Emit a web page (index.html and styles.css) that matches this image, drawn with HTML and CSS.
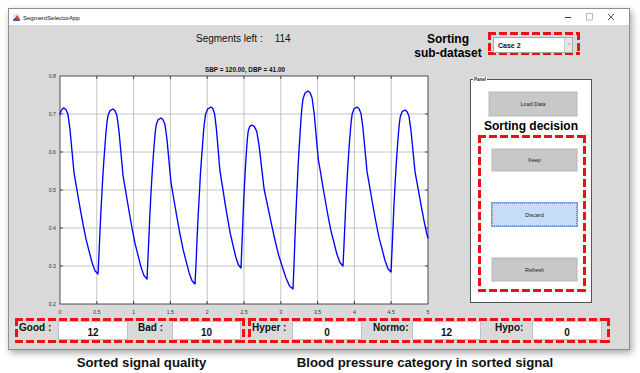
FILE: index.html
```html
<!DOCTYPE html>
<html>
<head>
<meta charset="utf-8">
<link rel="stylesheet" href="styles.css">
</head>
<body>
<div class="window">
  <div class="titlebar">
    <svg class="appicon" width="7" height="7" viewBox="0 0 7 7">
      <rect x="0" y="0" width="7" height="7" fill="#dfe6f3"/>
      <path d="M0 6 L2.5 3.5 L4 1 L5.5 3 L7 6 Z" fill="#d6452a"/>
      <path d="M0 6 L2.5 3.5 L3.5 5 L7 6 L7 7 L0 7 Z" fill="#2f5fb3"/>
    </svg>
    <span class="apptitle">SegmentSelectorApp</span>
    <div class="winctl">
      <svg width="62" height="12" viewBox="0 0 62 12">
        <line x1="3" y1="6.5" x2="9" y2="6.5" stroke="#222" stroke-width="0.9"/>
        <rect x="24.5" y="2.5" width="6" height="6.5" fill="none" stroke="#aaa" stroke-width="0.8"/>
        <path d="M46 3 L52 9 M52 3 L46 9" stroke="#333" stroke-width="0.8"/>
      </svg>
    </div>
  </div>
  <div class="content">
    <div class="toprow">
      <div class="segleft">Segments left :<span class="segnum">114</span></div>
      <div class="sortlabel">Sorting<br>sub-dataset</div>
      <div class="dropbox dashed">
        <div class="select"><span class="selval">Case 2</span><span class="selarrow">&#8964;</span></div>
      </div>
    </div>
    <div class="midrow">
      <svg class="plot" width="451" height="256" viewBox="9 60 451 256">
        <text class="ptitle" x="245" y="71.5" text-anchor="middle">SBP = 120.00, DBP = 41.00</text>
        <rect x="60" y="76" width="368" height="228" fill="#fff"/>
        <g stroke="#bdbdbd" stroke-width="0.9">
          <line x1="96.8" y1="76" x2="96.8" y2="304"/>
          <line x1="133.6" y1="76" x2="133.6" y2="304"/>
          <line x1="170.4" y1="76" x2="170.4" y2="304"/>
          <line x1="207.2" y1="76" x2="207.2" y2="304"/>
          <line x1="244" y1="76" x2="244" y2="304"/>
          <line x1="280.8" y1="76" x2="280.8" y2="304"/>
          <line x1="317.6" y1="76" x2="317.6" y2="304"/>
          <line x1="354.4" y1="76" x2="354.4" y2="304"/>
          <line x1="391.2" y1="76" x2="391.2" y2="304"/>
          <line x1="60" y1="114" x2="428" y2="114"/>
          <line x1="60" y1="152" x2="428" y2="152"/>
          <line x1="60" y1="190" x2="428" y2="190"/>
          <line x1="60" y1="228" x2="428" y2="228"/>
          <line x1="60" y1="266" x2="428" y2="266"/>
        </g>
        <g stroke="#262626" stroke-width="0.8">
          <path d="M96.8 76v3M133.6 76v3M170.4 76v3M207.2 76v3M244 76v3M280.8 76v3M317.6 76v3M354.4 76v3M391.2 76v3"/>
          <path d="M96.8 304v-3M133.6 304v-3M170.4 304v-3M207.2 304v-3M244 304v-3M280.8 304v-3M317.6 304v-3M354.4 304v-3M391.2 304v-3"/>
          <path d="M60 114h3M60 152h3M60 190h3M60 228h3M60 266h3"/>
          <path d="M428 114h-3M428 152h-3M428 190h-3M428 228h-3M428 266h-3"/>
          <rect x="60" y="76" width="368" height="228" fill="none"/>
        </g>
        <g class="ytick" text-anchor="end">
          <text x="56" y="78">0.8</text>
          <text x="56" y="116">0.7</text>
          <text x="56" y="154">0.6</text>
          <text x="56" y="192">0.5</text>
          <text x="56" y="230">0.4</text>
          <text x="56" y="268">0.3</text>
          <text x="56" y="306">0.2</text>
        </g>
        <g class="xtick" text-anchor="middle">
          <text x="60" y="314">0</text>
          <text x="96.8" y="314">0.5</text>
          <text x="133.6" y="314">1</text>
          <text x="170.4" y="314">1.5</text>
          <text x="207.2" y="314">2</text>
          <text x="244" y="314">2.5</text>
          <text x="280.8" y="314">3</text>
          <text x="317.6" y="314">3.5</text>
          <text x="354.4" y="314">4</text>
          <text x="391.2" y="314">4.5</text>
          <text x="428" y="314">5</text>
        </g>
        <polyline fill="none" stroke="#0000ff" stroke-width="1.35" stroke-linejoin="round" stroke-linecap="round" points="60,114 61,111 62,109.5 63,108.4 64,108 66,109.7 68,114.6 70,129.6 72,151.2 74,172.7 76,184.4 78,196 80,207.6 83,224.2 86,239.1 89,250.8 92,262.4 95,270.7 98,274 99,254.2 100,231.1 101,209.7 102,191.5 103,173.4 104,158.5 105,145.3 106,132.1 107,122.2 108,115.6 110,110.7 113,109 115,110.7 117,115.8 119,131.1 121,153.2 123,175.3 125,187.2 127,199.1 129,211 132,228 135,243.3 138,255.2 141,267.1 144,275.6 147,279 147.9,259.7 148.9,237.1 149.8,216.2 150.7,198.5 151.7,180.8 152.6,166.3 153.5,153.4 154.5,140.5 155.4,130.9 156.3,124.4 158.2,119.6 161,118 163,119.7 165,124.6 167,139.6 169,161.2 171,182.7 173,194.4 175,206 177,217.6 180,234.2 183,249.1 186,260.8 189,272.4 192,280.7 195,284 196.1,262.8 197.1,238 198.2,215 199.3,195.5 200.3,176 201.4,160.1 202.5,145.9 203.5,131.8 204.6,121.2 205.7,114.1 207.8,108.8 211,107 212.8,108.6 214.5,113.4 216.3,127.9 218.1,148.9 219.8,169.8 221.6,181.1 223.4,192.3 225.1,203.6 227.8,219.7 230.4,234.2 233.1,245.5 235.7,256.7 238.4,264.8 241,268 241.7,250.8 242.5,230.8 243.2,212.2 243.9,196.5 244.7,180.8 245.4,167.9 246.1,156.5 246.9,145 247.6,136.4 248.3,130.7 249.8,126.4 252,125 254.4,126.6 256.8,131.6 259.2,146.3 261.6,167.6 264.1,189 266.5,200.4 268.9,211.9 271.3,223.4 274.9,239.8 278.5,254.6 282.1,266 285.8,277.5 289.4,285.7 293,289 294,265.2 295,237.5 296,211.8 297,190 298,168.2 299,150.4 300,134.6 301,118.7 302,106.8 303,98.9 305,93 308,91 310.1,92.8 312.1,98 314.2,113.8 316.2,136.5 318.3,159.3 320.4,171.5 322.4,183.8 324.5,196 327.6,213.5 330.6,229.3 333.7,241.5 336.8,253.8 339.9,262.5 343,266 343.9,246.9 344.9,224.7 345.8,204 346.7,186.5 347.7,169 348.6,154.7 349.5,142 350.5,129.3 351.4,119.7 352.3,113.4 354.2,108.6 357,107 359,108.7 361,113.6 363,128.5 365,149.9 367,171.4 369,182.9 371,194.5 373,206 376,222.5 379,237.4 382,248.9 385,260.5 388,268.7 391,272 391.9,252.6 392.9,229.9 393.8,208.8 394.7,191 395.7,173.2 396.6,158.6 397.5,145.6 398.5,132.7 399.4,123 400.3,116.5 402.2,111.6 405,110 407,111.6 409,116.3 411,130.5 413,151.1 415,171.6 417,182.7 419,193.7 421,204.8 424,220.6 427,234.8 428,238"/>
      </svg>
      <div class="panel">
        <span class="panellabel">Panel</span>
        <div class="btn loadbtn">Load Data</div>
        <div class="decision">Sorting decision</div>
        <div class="decbox dashed">
          <div class="btn decbtn keep">Keep</div>
          <div class="btn decbtn focus">Discard</div>
          <div class="btn decbtn">Refresh</div>
        </div>
      </div>
    </div>
    <div class="botrow">
      <div class="group g1 dashed">
        <span class="flabel w39">Good :</span><div class="field w70">12</div>
        <span class="flabel ml10 w34">Bad :</span><div class="field w69">10</div>
      </div>
      <div class="group g2 dashed">
        <span class="flabel w40">Hyper :</span><div class="field w70">0</div>
        <span class="flabel ml11 w39">Normo:</span><div class="field w69">12</div>
        <span class="flabel ml14 w37">Hypo:</span><div class="field w70">0</div>
      </div>
    </div>
  </div>
</div>
<div class="captions">
  <div class="cap cap1">Sorted signal quality</div>
  <div class="cap cap2">Blood pressure category in sorted signal</div>
</div>
</body>
</html>
```

FILE: styles.css
```css
* { box-sizing: border-box; }

body {
  margin: 0;
  width: 640px;
  height: 373px;
  overflow: hidden;
  background: #ffffff;
  font-family: "Liberation Sans", Arial, sans-serif;
  color: #000;
}

.window {
  margin: 8px 0 0 8px;
  width: 622px;
  height: 342px;
  border: 1px solid #8e8e8e;
  box-shadow: 2px 3px 7px rgba(0, 0, 0, 0.35);
  display: flex;
  flex-direction: column;
  background: #d9d9d9;
}

.titlebar {
  height: 16px;
  background: #ffffff;
  display: flex;
  align-items: center;
}

.appicon {
  margin-left: 4px;
  display: block;
}

.apptitle {
  margin-left: 3px;
  font-size: 6.2px;
  color: #111;
  letter-spacing: -0.1px;
}

.winctl {
  margin-left: auto;
  margin-right: 5px;
  display: flex;
}

.winctl svg { display: block; }

.content {
  flex: 1;
  background: #d9d9d9;
  display: flex;
  flex-direction: column;
}

.toprow {
  height: 35px;
  display: flex;
  align-items: flex-start;
}

.segleft {
  margin-left: 187px;
  margin-top: 8px;
  width: 100px;
  font-size: 10px;
  line-height: 12px;
  color: #111;
  white-space: nowrap;
}

.segnum { margin-left: 12px; }

.sortlabel {
  margin-left: 117px;
  margin-top: 7px;
  width: 70px;
  text-align: center;
  font-size: 12px;
  font-weight: bold;
  line-height: 14px;
}

.dashed {
  background:
    repeating-linear-gradient(90deg, #ee1111 0 8px, transparent 8px 11px) top left / 100% 3px no-repeat,
    repeating-linear-gradient(90deg, #ee1111 0 8px, transparent 8px 11px) bottom left / 100% 3px no-repeat,
    repeating-linear-gradient(180deg, #ee1111 0 8px, transparent 8px 11px) top left / 3px 100% no-repeat,
    repeating-linear-gradient(180deg, #ee1111 0 8px, transparent 8px 11px) top right / 3px 100% no-repeat;
}

.dropbox {
  margin-left: 5px;
  margin-top: 7px;
  width: 92px;
  height: 23px;
  padding: 5px 0 0 5px;
}

.select {
  width: 80px;
  height: 16px;
  background: #fff;
  border: 1px solid #a9a9a9;
  display: flex;
  align-items: center;
}

.selval {
  margin-left: 4px;
  font-size: 7px;
  font-weight: bold;
  color: #111;
}

.selarrow {
  margin-left: auto;
  width: 8px;
  height: 14px;
  background: #e6e6e6;
  border-left: 1px solid #cfcfcf;
  color: #8a8a8a;
  font-size: 7px;
  line-height: 10px;
  text-align: center;
}

.midrow {
  height: 256px;
  display: flex;
  align-items: flex-start;
}

.plot { display: block; flex-shrink: 0; }

.ptitle {
  font-size: 6.4px;
  font-weight: bold;
  fill: #111;
}

.ytick text, .xtick text {
  font-size: 5.2px;
  fill: #333;
}

.panel {
  position: relative;
  margin-left: 10px;
  margin-top: 19px;
  width: 122px;
  height: 224px;
  flex-shrink: 0;
  background: #ffffff;
  border: 1px solid #555;
  display: flex;
  flex-direction: column;
}

.panellabel {
  position: absolute;
  left: 2px;
  top: -3px;
  font-size: 4.5px;
  font-weight: bold;
  line-height: 5px;
  padding: 0 1px;
  background: #fff;
  color: #222;
}

.btn {
  flex-shrink: 0;
  background: #c8c8c8;
  border: 1px solid #dcdcdc;
  outline: 1px solid #bdbdbd;
  outline-offset: -2px;
  display: flex;
  align-items: center;
  justify-content: center;
  font-size: 5.4px;
  color: #222;
}

.loadbtn {
  margin-left: 17px;
  margin-top: 11px;
  width: 90px;
  height: 26px;
}

.decision {
  flex-shrink: 0;
  margin-top: 2px;
  text-align: center;
  font-size: 12px;
  font-weight: bold;
  line-height: 14px;
}

.decbox {
  flex-shrink: 0;
  margin-left: 7px;
  margin-top: 2px;
  width: 108px;
  height: 157px;
  display: flex;
  flex-direction: column;
  padding: 13px 0 0 13px;
}

.decbtn {
  width: 87px;
  height: 25px;
  margin-bottom: 30px;
}

.decbtn.keep {
  height: 24px;
}

.decbtn.focus {
  background: #c6ddf7;
  border: 1px solid #7ba6da;
  outline: 1px dotted #6a86a8;
}

.botrow {
  margin-top: 2px;
  display: flex;
}

.group {
  height: 25px;
  display: flex;
  align-items: flex-start;
  padding: 3px 0 0 4px;
}

.g1 { margin-left: 6px; width: 230px; }
.g2 { margin-left: 3px; width: 362px; }

.flabel {
  font-size: 10px;
  font-weight: bold;
  line-height: 12px;
  margin-top: 1px;
  white-space: nowrap;
  color: #111;
}

.field {
  height: 19px;
  background: #fff;
  border: 1px solid #b8c2d2;
  font-size: 10px;
  font-weight: bold;
  text-align: center;
  line-height: 19px;
  padding-top: 1px;
  color: #111;
}

.w34 { width: 34px; }
.w37 { width: 37px; }
.w39 { width: 39px; }
.w40 { width: 40px; }
.w69 { width: 69px; }
.w70 { width: 70px; }
.ml10 { margin-left: 10px; }
.ml11 { margin-left: 11px; }
.ml14 { margin-left: 14px; }

.captions {
  display: flex;
  margin-top: 5px;
}

.cap {
  font-size: 13.2px;
  font-weight: bold;
  line-height: 15px;
  text-align: center;
  color: #111;
}

.cap1 { width: 283px; }
.cap2 { width: 284px; }
```
